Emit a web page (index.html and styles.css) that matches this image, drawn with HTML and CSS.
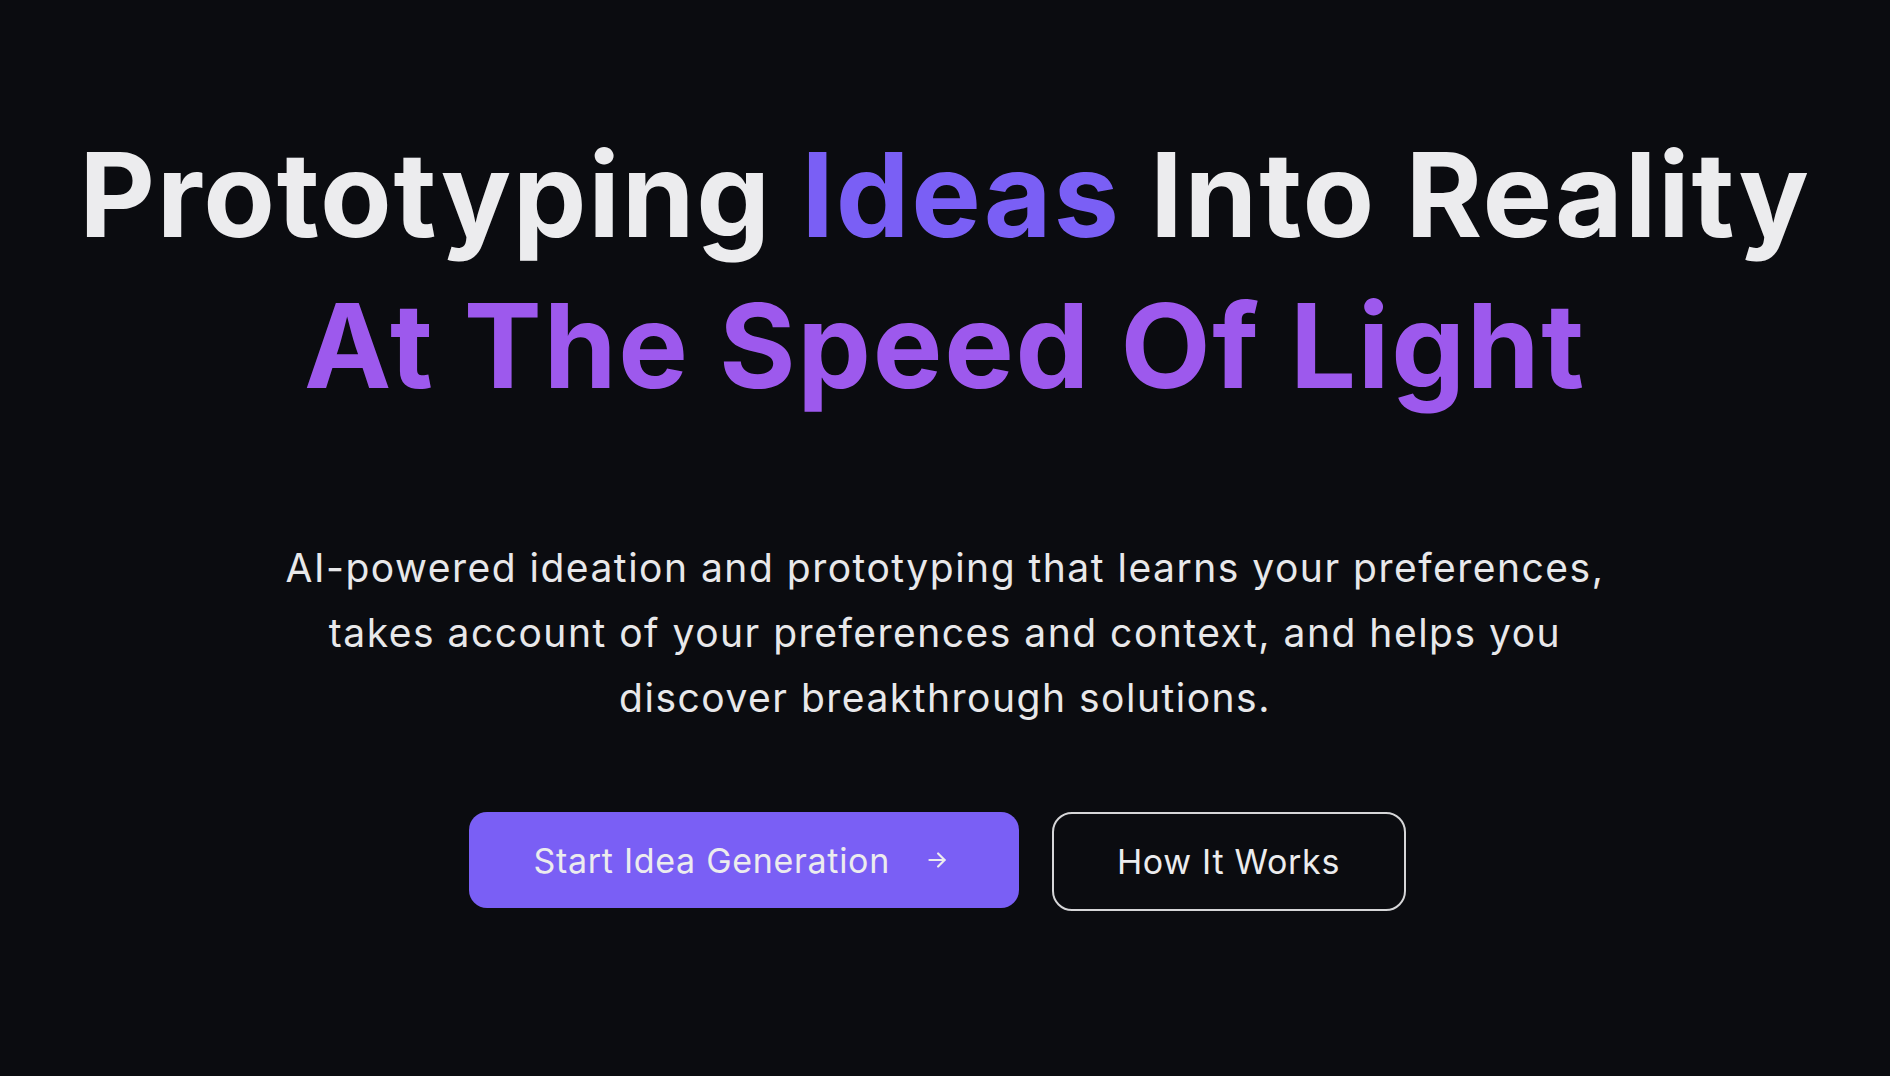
FILE: index.html
```html
<!DOCTYPE html>
<html lang="en">
<head>
<meta charset="utf-8">
<title>Prototyping Ideas Into Reality</title>
<link rel="stylesheet" href="styles.css">
</head>
<body>
<main class="hero">
  <h1 class="hero-title">
    <span class="line">Prototyping <span class="accent-blue">Ideas</span> Into Reality</span>
    <span class="line accent-purple">At The Speed Of Light</span>
  </h1>
  <p class="hero-text">AI-powered ideation and prototyping that learns your preferences, takes account of your preferences and context, and helps you discover breakthrough solutions.</p>
  <div class="actions">
    <a class="btn btn-primary" href="#">Start Idea Generation
      <svg class="arrow" viewBox="0 0 24 24" width="24" height="24" fill="none" stroke="currentColor" stroke-width="2" stroke-linecap="round" stroke-linejoin="round"><path d="M5 12h14"/><path d="M13 6l6 6-6 6"/></svg>
    </a>
    <a class="btn btn-outline" href="#">How It Works</a>
  </div>
</main>
</body>
</html>
```

FILE: styles.css
```css
html, body {
  margin: 0;
  padding: 0;
}
body {
  background: #0b0c10;
  color: #ececee;
  font-family: Inter, "Noto Sans", sans-serif;
  min-height: 1076px;
}
.hero {
  display: flex;
  flex-direction: column;
  align-items: center;
  padding-top: 119px;
}
.hero-title {
  margin: 0;
  font-size: 117px;
  line-height: 151px;
  font-weight: 700;
  letter-spacing: 1.7px;
  text-align: center;
  color: #ececee;
}
.line {
  display: block;
  white-space: nowrap;
}
.accent-blue {
  color: #7a5ff5;
}
.accent-purple {
  color: #9d59ed;
}
.hero-text {
  margin: 114px 0 0;
  max-width: 1340px;
  font-size: 39px;
  line-height: 65px;
  font-weight: 400;
  letter-spacing: 1.5px;
  text-align: center;
  color: #e8e8ea;
}
.actions {
  display: flex;
  gap: 33px;
  margin-top: 82px;
  padding-right: 16px;
  align-items: flex-start;
}
.btn {
  display: inline-flex;
  align-items: center;
  box-sizing: border-box;
  text-decoration: none;
  font-size: 34px;
  font-weight: 400;
  letter-spacing: 0.7px;
  color: #ececee;
}
.btn-primary {
  width: 550px;
  height: 96px;
  padding: 0 69px 0 65px;
  background: #7a5ff5;
  border-radius: 18px;
  justify-content: space-between;
}
.arrow {
  width: 26px;
  height: 26px;
}
.btn-outline {
  width: 354px;
  height: 99px;
  justify-content: center;
  border: 2px solid #d6d6d8;
  border-radius: 20px;
  background: #0b0c10;
}
```
